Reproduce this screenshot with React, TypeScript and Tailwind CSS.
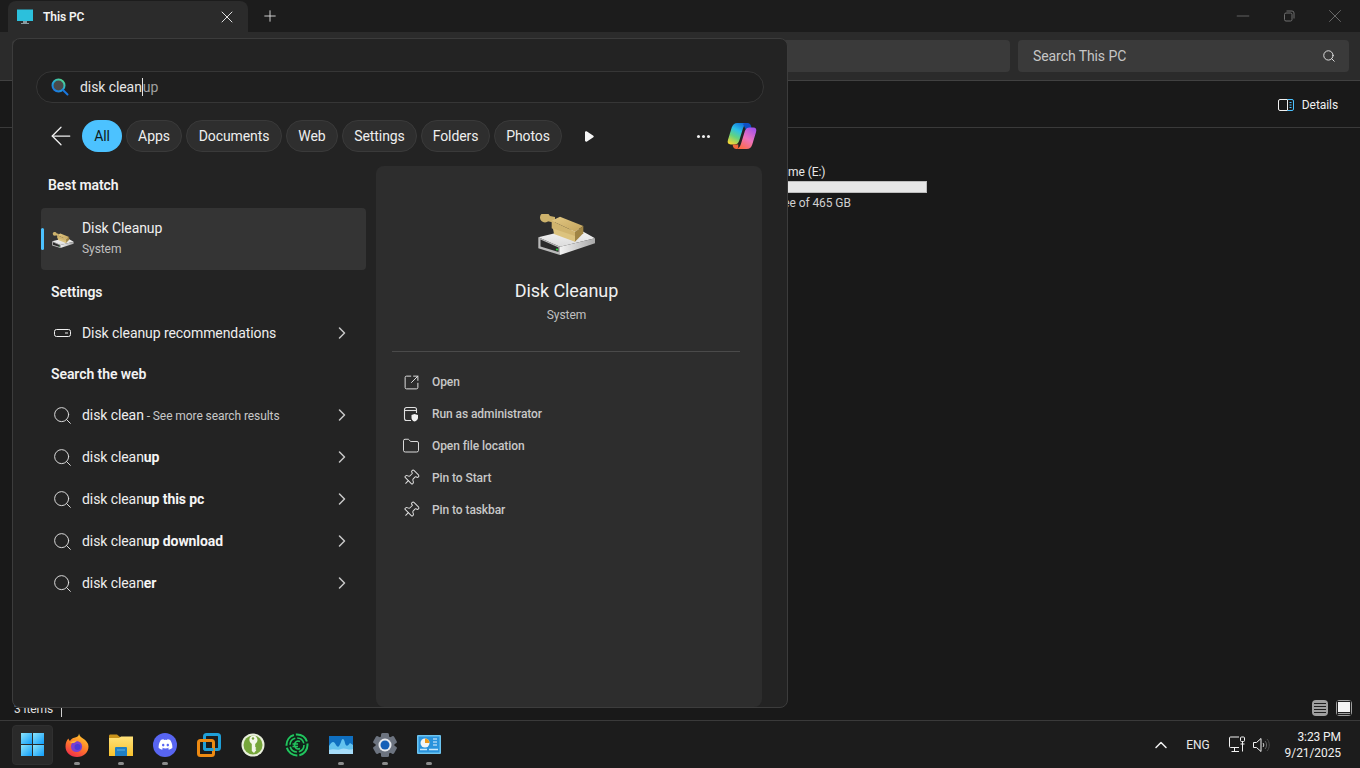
import { ArrowLeft, ChevronRight, ChevronUp, Folder, Minus, Pin, Plus, Search, SquareArrowOutUpRight, X } from 'lucide-react';
import { FaDiscord } from 'react-icons/fa';

function DiskIcon({ className }: { className?: string }) {
  return (
    <svg viewBox="0 0 58 42" className={className}>
      <defs>
        <linearGradient id="dk-top" x1="0" y1="0" x2="0" y2="1">
          <stop offset="0" stopColor="#f6f6f6" />
          <stop offset="1" stopColor="#dcdcdc" />
        </linearGradient>
        <linearGradient id="dk-side" x1="0" y1="0" x2="1" y2="0">
          <stop offset="0" stopColor="#f2f2f2" />
          <stop offset="1" stopColor="#a8a8a8" />
        </linearGradient>
        <linearGradient id="dk-wood" x1="0" y1="0" x2="1" y2="1">
          <stop offset="0" stopColor="#e2c884" />
          <stop offset="1" stopColor="#c4a45c" />
        </linearGradient>
      </defs>
      <path d="M0.3 23.3 L38.7 14 L57 24.3 L22 32.7 Z" fill="url(#dk-top)" />
      <path d="M22 32.7 L57 24.3 L57 29.3 L22 41 Z" fill="url(#dk-side)" />
      <path d="M0.3 23.3 L22 32.7 L22 41 L0.3 34.3 Z" fill="#b9b9b9" />
      <path d="M2.5 25.5 L20.5 33.5 L20.5 38 L2.5 32.5 Z" fill="#2a2a2a" />
      <circle cx="19" cy="35.5" r="1.1" fill="#25d83c" />
      <circle cx="7" cy="3.5" r="5" fill="#cdb26c" />
      <path d="M7 1 L17 3 L17 9 L7 6.5 Z" fill="#cdb26c" />
      <path d="M13.7 6.7 L22 2.7 L45.3 12 L37 17.7 Z" fill="url(#dk-wood)" />
      <path d="M13.7 6.7 L37 17.7 L37 27.7 L13.7 14.3 Z" fill="#d0b46e" />
      <path d="M37 17.7 L45.3 12 L45.3 19.3 L37 27.7 Z" fill="#a08545" />
      <path d="M15 14.5 L37 22 L37 27.7 L16 20 Z" fill="#dcc37e" />
    </svg>
  );
}

function CopilotIcon() {
  return (
    <svg viewBox="0 0 32 30" className="w-[30px] h-[28px]">
      <defs>
        <linearGradient id="cp-a" x1="0.7" y1="0" x2="0.2" y2="1">
          <stop offset="0" stopColor="#1272dc" />
          <stop offset="0.35" stopColor="#2bc0e8" />
          <stop offset="0.65" stopColor="#63d37e" />
          <stop offset="1" stopColor="#f6d635" />
        </linearGradient>
        <linearGradient id="cp-b" x1="0.8" y1="0" x2="0.2" y2="1">
          <stop offset="0" stopColor="#a552ea" />
          <stop offset="0.5" stopColor="#ee73bc" />
          <stop offset="1" stopColor="#ff6a3c" />
        </linearGradient>
      </defs>
      <path d="M11 1 L22 1 C19 2 18 4 17 7 L13 20 C12 23 10 24 8 24 L4 24 C1 24 0 22 1 19 L5 6 C6 3 8 1 11 1 Z" fill="url(#cp-a)" />
      <path d="M17 2 C18 1 20 1 22 1 C24 1 26 3 26 6 L26 8 L20 8 Z" fill="#0f4fc4" />
      <path d="M21 29 L10 29 C13 28 14 26 15 23 L19 10 C20 7 22 6 24 6 L28 6 C31 6 32 8 31 11 L27 24 C26 27 24 29 21 29 Z" fill="url(#cp-b)" />
      <path d="M6 24 L12 24 L12 27 C12 28 11 29 10 29 C8 29 6 27 6 24 Z" fill="#f2663a" />
    </svg>
  );
}

function LensIcon() {
  return (
    <svg viewBox="0 0 18 18" className="w-[18px] h-[18px]">
      <defs>
        <linearGradient id="lens" x1="0.8" y1="0" x2="0.1" y2="1">
          <stop offset="0" stopColor="#52d48c" />
          <stop offset="0.5" stopColor="#22a8d8" />
          <stop offset="1" stopColor="#1a6fe0" />
        </linearGradient>
      </defs>
      <circle cx="7.5" cy="7.5" r="6" fill="#4a4a4a" stroke="url(#lens)" strokeWidth="2" />
      <path d="M12 12 L16.5 16.5" stroke="#1a78e0" strokeWidth="2" strokeLinecap="round" />
    </svg>
  );
}

function AdminIcon() {
  return (
    <svg viewBox="0 0 16 16" className="w-4 h-4" fill="none" stroke="#e0e0e0" strokeWidth="1.1">
      <path d="M8 14.5 H3.5 A2 2 0 0 1 1.5 12.5 V3.5 A2 2 0 0 1 3.5 1.5 H11.5 A2 2 0 0 1 13.5 3.5 V7" />
      <path d="M1.5 4.5 H13.5" />
      <path d="M11.5 8 L15 9 V11.5 C15 13.5 13.5 15 11.5 15.5 C9.5 15 8.5 13.5 8.5 11.5 V9 Z" fill="#f2f2f2" stroke="none" />
    </svg>
  );
}

function WindowsLogo() {
  const cells = ['M0 0h11v11H0z', 'M12 0h11v11H12z', 'M0 12h11v11H0z', 'M12 12h11v11H12z'];
  return (
    <svg viewBox="0 0 23 23" className="w-[23px] h-[23px]">
      <defs>
        <linearGradient id="win" x1="0" y1="0" x2="1" y2="1">
          <stop offset="0" stopColor="#8be4fb" />
          <stop offset="1" stopColor="#0f9dfb" />
        </linearGradient>
      </defs>
      {cells.map((d) => <path key={d} d={d} fill="url(#win)" />)}
    </svg>
  );
}

function FirefoxIcon() {
  return (
    <svg viewBox="0 0 24 24" className="w-6 h-6">
      <defs>
        <linearGradient id="ff" x1="0.7" y1="0" x2="0.2" y2="1">
          <stop offset="0" stopColor="#ffcb2e" />
          <stop offset="0.5" stopColor="#ff7a2a" />
          <stop offset="1" stopColor="#f0264e" />
        </linearGradient>
      </defs>
      <path d="M14 0.5 C14.5 3 16 4 18 5.5 C21 7.5 23.5 10 23.5 13.5 C23.5 19.5 18.5 24 12 24 C5.5 24 0.5 19.5 0.5 13.5 C0.5 10 1.5 7.5 3.5 5.5 C3.8 7 4.5 7.5 5 8 C6.5 5 10 4.5 11.5 4 C13 3.5 14 2 14 0.5 Z" fill="url(#ff)" />
      <circle cx="11.5" cy="13.5" r="5.6" fill="#7b3fd1" />
      <circle cx="12.5" cy="14" r="3" fill="#4b3ad6" />
      <path d="M5 10 C7 8 10 7.5 12 8 L9 10 Z" fill="#ffb23a" />
    </svg>
  );
}

function FolderIcon() {
  return (
    <svg viewBox="0 0 24 24" className="w-6 h-6">
      <defs>
        <linearGradient id="fd" x1="0" y1="0" x2="0" y2="1">
          <stop offset="0" stopColor="#ffe27a" />
          <stop offset="1" stopColor="#f8c22d" />
        </linearGradient>
      </defs>
      <path d="M0 3 C0 2 0.5 1.5 1.5 1.5 H8 L11 4 V6 H0 Z" fill="#c9931a" />
      <path d="M0 5 H10 L12 3.5 H24 V23 H0 Z" fill="url(#fd)" />
      <path d="M6 15 C6 14 7 14 7 14 H17 C18 14 18 15 18 15 V23 H6 Z" fill="#1f7fc4" />
      <path d="M8 17 H16" stroke="#5fb3e6" strokeWidth="1" />
    </svg>
  );
}

function VmIcon() {
  return (
    <svg viewBox="0 0 24 24" className="w-6 h-6" fill="none" strokeWidth="3">
      <rect x="7.5" y="1.5" width="15" height="15" rx="2" stroke="#1f9fd8" />
      <rect x="1.5" y="7.5" width="15" height="15" rx="2" stroke="#ee8a12" />
      <path d="M7.5 12 V15 C7.5 16 8 16.5 9 16.5 H16.5" stroke="#1f9fd8" />
    </svg>
  );
}

function KeyIcon() {
  return (
    <svg viewBox="0 0 24 24" className="w-6 h-6">
      <circle cx="12" cy="12" r="11.5" fill="#e9efdc" />
      <path d="M23.5 12 A11.5 11.5 0 0 1 .5 12 A11.5 11.5 0 0 0 23.5 12 Z" fill="#5f8f2f" />
      <circle cx="12" cy="12" r="9.5" fill="#76a63a" />
      <path d="M12 2.5 a4.5 4.5 0 0 1 2.2 8.4 V14 l1.2 1 -1.2 1 1.2 1 -2.4 3 -2.2 -2 V10.9 A4.5 4.5 0 0 1 12 2.5 Z" fill="#f4f7ea" />
      <circle cx="12" cy="5.5" r="1.2" fill="#76a63a" />
    </svg>
  );
}

function EuroRingIcon() {
  return (
    <svg viewBox="0 0 24 24" className="w-6 h-6" fill="none" stroke="#22c55e">
      <circle cx="12" cy="12" r="12" fill="#11241a" stroke="none" />
      <circle cx="12" cy="12" r="10.5" strokeWidth="2" strokeDasharray="14 2" />
      <circle cx="12" cy="12" r="7" strokeWidth="1.6" strokeDasharray="9 2" />
      <path d="M15 8.5 C12 7 9.5 9 9.5 12 C9.5 15 12 17 15 15.5 M7.5 11 H13 M7.5 13.5 H13" strokeWidth="1.6" />
    </svg>
  );
}

function ChartIcon() {
  return (
    <svg viewBox="0 0 24 18" className="w-6 h-[18px]">
      <rect width="24" height="18" fill="#0f6fc0" />
      <path d="M0 10 C3 5 5 5 7 9 C9 12 10 11 12 6 C13 2 15 2 16 7 C17 11 19 10 21 7 L24 9 V18 H0 Z" fill="#63c2ee" />
      <path d="M0 14 C5 12 9 15 12 13 C16 11 20 15 24 13 V18 H0 Z" fill="#a6dcf8" />
    </svg>
  );
}

function GearIcon() {
  const teeth = [0, 60, 120, 180, 240, 300];
  return (
    <svg viewBox="0 0 24 24" className="w-6 h-6">
      <circle cx="12" cy="12" r="9.5" fill="#6d7480" />
      {teeth.map((deg) => (
        <rect key={deg} x="8" y="0" width="8" height="6" rx="1.5" fill="#6d7480" transform={`rotate(${deg} 12 12)`} />
      ))}
      <circle cx="12" cy="12" r="6.5" fill="#e6e9ee" />
      <circle cx="12" cy="12" r="4.5" fill="#1560b8" />
    </svg>
  );
}

function PanelIcon() {
  return (
    <svg viewBox="0 0 24 19" className="w-6 h-[19px]">
      <rect width="24" height="19" rx="1" fill="#6cc4f0" />
      <rect x="1.5" y="1.5" width="21" height="16" fill="#2a93dc" />
      <circle cx="8" cy="8" r="4.5" fill="#f4f4f4" />
      <path d="M8 8 V3.5 A4.5 4.5 0 0 1 12.5 8 Z" fill="#f09a1a" />
      <path d="M3 14.5 H10 M12 14.5 H21" stroke="#cdeafb" strokeWidth="1.5" />
      <path d="M16 4 H20 M16 7 H20 M16 10 H20" stroke="#e6f4fd" strokeWidth="1.2" />
    </svg>
  );
}

function NetworkIcon() {
  return (
    <svg viewBox="0 0 17 18" className="w-[17px] h-[18px]" fill="none" stroke="#f2f2f2" strokeWidth="1">
      <path d="M10 11.5 H1.5 A1 1 0 0 1 .5 10.5 V2 A1 1 0 0 1 1.5 1 H10" />
      <path d="M5.5 11.5 V15 M2.5 15.5 H10" />
      <rect x="11.5" y="1" width="4" height="4.5" rx="1" />
      <path d="M13.5 5.5 V15.5 M11.5 8 H15.5" />
    </svg>
  );
}

function VolumeIcon() {
  return (
    <svg viewBox="0 0 17 16" className="w-[17px] h-4" fill="none" strokeWidth="1">
      <path d="M.5 5.5 H3.5 L8 1.5 V14.5 L3.5 10.5 H.5 Z" stroke="#f2f2f2" />
      <path d="M10 6 C11 7 11 9 10 10" stroke="#d0d0d0" />
      <path d="M12 4 C14 6 14 10 12 12" stroke="#6a6a6a" />
      <path d="M14 2 C17 5 17 11 14 14" stroke="#4c4c4c" />
    </svg>
  );
}

const filters = [
  { label: 'Apps', w: 'w-[56px]' },
  { label: 'Documents', w: 'w-[96px]' },
  { label: 'Web', w: 'w-[52px]' },
  { label: 'Settings', w: 'w-[75px]' },
  { label: 'Folders', w: 'w-[69px]' },
  { label: 'Photos', w: 'w-[68px]' },
];

const webResults = [
  { plain: 'disk clean', bold: '', extra: ' - See more search results' },
  { plain: 'disk clean', bold: 'up', extra: '' },
  { plain: 'disk clean', bold: 'up this pc', extra: '' },
  { plain: 'disk clean', bold: 'up download', extra: '' },
  { plain: 'disk clean', bold: 'er', extra: '' },
];

const actions = [
  { label: 'Open', icon: <SquareArrowOutUpRight className="w-[17px] h-[17px]" strokeWidth={1.4} /> },
  { label: 'Run as administrator', icon: <AdminIcon /> },
  { label: 'Open file location', icon: <Folder className="w-[18px] h-[18px]" strokeWidth={1.3} /> },
  { label: 'Pin to Start', icon: <Pin className="w-[18px] h-[18px] rotate-45" strokeWidth={1.3} /> },
  { label: 'Pin to taskbar', icon: <Pin className="w-[18px] h-[18px] rotate-45" strokeWidth={1.3} /> },
];

const taskbarApps = [
  { icon: <FirefoxIcon />, open: true },
  { icon: <FolderIcon />, open: true },
  { icon: <div className="w-6 h-6 rounded-full bg-[#5865f2] flex items-center justify-center text-white"><FaDiscord className="w-[15px] h-[15px]" /></div>, open: true },
  { icon: <VmIcon />, open: false },
  { icon: <KeyIcon />, open: false },
  { icon: <EuroRingIcon />, open: false },
  { icon: <ChartIcon />, open: true },
  { icon: <GearIcon />, open: true },
  { icon: <PanelIcon />, open: true },
];

function Explorer() {
  return (
    <div className="flex-1 flex flex-col min-h-0">
      <div className="h-[32px] bg-[#1c1c1c] flex items-end pl-2">
        <div className="w-[240px] h-[31px] bg-[#2b2b2b] rounded-t-lg flex items-center pl-[9px] pr-[11px]">
          <svg viewBox="0 0 16 16" className="w-4 h-4 shrink-0">
            <rect y="0.5" width="16" height="11.5" fill="#2cc0dc" />
            <path d="M6 12 H10 V14 H12 V15 H4 V14 H6 Z" fill="#8a9aa0" />
          </svg>
          <span className="ml-[10px] text-[12px] font-semibold text-[#f2f2f2]">This PC</span>
          <X className="ml-auto w-5 h-5 text-[#e0e0e0]" strokeWidth={1.2} />
        </div>
        <Plus className="ml-[13px] mb-[7px] w-[18px] h-[18px] text-[#e0e0e0]" strokeWidth={1.2} />
        <div className="ml-auto flex items-center text-[#6f6f6f] h-full">
          <Minus className="w-5 h-5" strokeWidth={1} />
          <svg viewBox="0 0 12 12" className="ml-[30px] w-3 h-3" fill="none" stroke="#6f6f6f">
            <rect x="1.5" y="3" width="7.5" height="8" rx="1.5" />
            <path d="M3.5 1 H9 A2 2 0 0 1 11 3 V8.5" />
          </svg>
          <X className="ml-[29px] mr-[14px] w-[22px] h-[22px]" strokeWidth={1} />
        </div>
      </div>
      <div className="h-[49px] bg-[#2b2b2b] border-b border-[#414141] flex items-center justify-end pr-[11px]">
        <div className="flex-1 h-[32px] ml-[12px] bg-[#3a3a3a] rounded" />
        <div className="ml-2 w-[331px] h-[32px] bg-[#3a3a3a] rounded flex items-center justify-between pl-[15px] pr-[13px]">
          <span className="text-[14px] text-[#c6c6c6]">Search This PC</span>
          <Search className="w-[14px] h-[14px] text-[#e6e6e6]" strokeWidth={1.6} />
        </div>
      </div>
      <div className="h-[47px] bg-[#191919] border-b border-[#3a3a3a] flex items-center justify-end pr-[22px] pt-[2px]">
        <svg viewBox="0 0 16 12" className="w-4 h-3" fill="none" strokeWidth="1">
          <path d="M9.5 .5 H2 A1.5 1.5 0 0 0 .5 2 V10 A1.5 1.5 0 0 0 2 11.5 H9.5 Z" stroke="#f0f0f0" />
          <path d="M9.5 .5 H14 A1.5 1.5 0 0 1 15.5 2 V10 A1.5 1.5 0 0 1 14 11.5 H9.5" stroke="#4cc2ff" />
          <path d="M11.5 3.5 H13.5 M11.5 6 H13.5 M11.5 8.5 H13.5" stroke="#4cc2ff" />
        </svg>
        <span className="ml-2 text-[12px] text-[#f0f0f0]">Details</span>
      </div>
      <div className="flex-1 bg-[#191919] pl-[740px] pt-[36px]">
        <div className="w-[187px] text-[12px] leading-4 text-[#e8e8e8]">
          <div className="-ml-[2px]">New Volume (E:)</div>
          <div className="mt-px h-[12px] bg-[#e6e6e6] border border-[#bcbcbc]" />
          <div className="mt-[2px] -ml-[6px] text-[#d0d0d0]">120 GB free of 465 GB</div>
        </div>
      </div>
      <div className="h-[24px] bg-[#191919] flex items-center pl-[14px] pr-2 text-[12px] text-[#e0e0e0]">
        <span className="mt-[2px]">3 items</span>
        <span className="ml-[8px] w-px h-[10px] bg-[#d0d0d0] mt-[8px]" />
        <div className="ml-auto flex gap-2">
          <div className="w-4 h-4 rounded-sm bg-[#a0a0a0] flex flex-col justify-center gap-[2px] px-[2px]">
            <span className="h-px bg-[#202020]" />
            <span className="h-px bg-[#202020]" />
            <span className="h-px bg-[#202020]" />
            <span className="h-px bg-[#202020]" />
          </div>
          <div className="w-4 h-4 rounded-sm bg-[#a0a0a0] p-px">
            <div className="h-full bg-[#202020] p-px flex flex-col gap-px">
              <span className="flex-1 bg-[#f5f5f5]" />
              <span className="h-px bg-[#a0a0a0]" />
            </div>
          </div>
        </div>
      </div>
    </div>
  );
}

function Taskbar() {
  return (
    <div className="h-[48px] bg-[#1c1c1c] border-t border-[#3a3a3a] flex items-center pl-[12px] pr-[19px] text-white">
      <div className="w-[41px] h-[40px] rounded bg-[#2a2a2a] border border-[#303030] flex items-center justify-center">
        <WindowsLogo />
      </div>
      <div className="ml-[2px] flex">
        {taskbarApps.map((app, i) => (
          <div key={i} className="relative w-[44px] h-[47px] flex items-center justify-center">
            {app.icon}
            {app.open && <span className="absolute bottom-[3px] left-[19px] w-[6px] h-[3px] rounded-full bg-[#8c8c8c]" />}
          </div>
        ))}
      </div>
      <div className="ml-auto flex items-center">
        <ChevronUp className="w-5 h-5 text-[#f0f0f0]" strokeWidth={1.8} />
        <span className="ml-[15px] text-[12px] text-[#e8e8e8]">ENG</span>
        <div className="ml-[19px] flex items-center gap-[7px]">
          <NetworkIcon />
          <VolumeIcon />
        </div>
        <div className="ml-[15px] text-[12px] leading-[16px] text-right text-[#f0f0f0]">
          <div>3:23 PM</div>
          <div>9/21/2025</div>
        </div>
      </div>
    </div>
  );
}

function SearchFlyout() {
  return (
    <div className="absolute left-[12px] top-[38px] w-[776px] h-[670px] bg-[#232323] border border-[#3c3c3c] rounded-lg overflow-hidden flex flex-col">
      <div className="mt-[32px] mx-[23px] h-[32px] rounded-full bg-[#1f1f1f] border border-[#363636] flex items-center pl-[14px] shrink-0">
        <LensIcon />
        <span className="ml-[11px] text-[14px] text-[#e6e6e6]">disk clean</span>
        <span className="w-px h-[18px] bg-[#e6e6e6]" />
        <span className="text-[14px] text-[#a0a0a0]">up</span>
      </div>
      <div className="mt-[17px] h-[32px] flex items-center pl-[33px] shrink-0">
        <ArrowLeft className="w-[30px] h-[30px] text-[#f0f0f0]" strokeWidth={1} />
        <div className="ml-[6px] w-[40px] h-[32px] rounded-full bg-[#4cc2ff] text-[#0f1a20] text-[14px] flex items-center justify-center">All</div>
        <div className="ml-1 flex gap-1">
          {filters.map((f) => (
            <div key={f.label} className={`${f.w} h-[32px] rounded-full bg-[#2e2e2e] border border-[#3a3a3a] text-[14px] text-[#eeeeee] flex items-center justify-center`}>
              {f.label}
            </div>
          ))}
        </div>
        <svg viewBox="0 0 10 11" className="ml-[22px] w-[10px] h-[11px]">
          <path d="M1 1.5 C1 .5 2 0 3 .5 L9 4.5 C10 5 10 6 9 6.5 L3 10.5 C2 11 1 10.5 1 9.5 Z" fill="#f5f5f5" />
        </svg>
        <div className="ml-[103px] flex gap-[2px]">
          <span className="w-[3px] h-[3px] rounded-full bg-[#f0f0f0]" />
          <span className="w-[3px] h-[3px] rounded-full bg-[#f0f0f0]" />
          <span className="w-[3px] h-[3px] rounded-full bg-[#f0f0f0]" />
        </div>
        <div className="ml-[17px]"><CopilotIcon /></div>
      </div>
      <div className="mt-[14px] flex-1 flex pl-[28px] pr-[25px] min-h-0">
        <div className="w-[325px] shrink-0">
          <div className="h-[42px] flex items-center pl-[7px] pb-[4px] text-[14px] font-semibold text-[#f2f2f2]">Best match</div>
          <div className="relative h-[62px] rounded bg-[#343434] flex items-center pl-[11px]">
            <span className="absolute left-0 top-[20px] w-[3px] h-[22px] rounded-full bg-[#4cc2ff]" />
            <DiskIcon className="w-[22px] h-[17px] mt-[2px]" />
            <div className="ml-2 pb-[3px]">
              <div className="text-[14px] leading-[20px] text-[#f0f0f0]">Disk Cleanup</div>
              <div className="mt-[3px] text-[12px] leading-4 text-[#c0c0c0]">System</div>
            </div>
          </div>
          <div className="h-[42px] flex items-center pl-[10px] pt-[2px] text-[14px] font-semibold text-[#f2f2f2]">Settings</div>
          <div className="h-[42px] flex items-center pl-[13px] pr-[14px]">
            <svg viewBox="0 0 17 8" className="w-[17px] h-2 shrink-0" fill="none" stroke="#f0f0f0">
              <rect x=".5" y=".5" width="16" height="7" rx="2" />
              <path d="M11 4 H14" />
            </svg>
            <span className="ml-[11px] text-[14px] text-[#eeeeee]">Disk cleanup recommendations</span>
            <ChevronRight className="ml-auto w-5 h-5 text-[#c8c8c8]" strokeWidth={1.8} />
          </div>
          <div className="h-[40px] flex items-center pl-[10px] text-[14px] font-semibold text-[#f2f2f2]">Search the web</div>
          {webResults.map((r) => (
            <div key={r.plain + r.bold + r.extra} className="h-[42px] flex items-center pl-[11px] pr-[14px]">
              <Search className="w-[21px] h-[21px] shrink-0 text-[#e0e0e0]" strokeWidth={1.1} />
              <span className="ml-[9px] text-[14px] text-[#eeeeee]">
                {r.plain}
                {r.bold && <span className="font-bold text-[#f5f5f5]">{r.bold}</span>}
                {r.extra && <span className="text-[12px] text-[#c8c8c8]">{r.extra}</span>}
              </span>
              <ChevronRight className="ml-auto w-5 h-5 text-[#c8c8c8]" strokeWidth={1.8} />
            </div>
          ))}
        </div>
        <div className="ml-[10px] flex-1 bg-[#2d2d2d] rounded-lg pl-4 pr-[22px] pt-[48px]">
          <div className="flex flex-col items-center pl-px">
            <DiskIcon className="w-[58px] h-[42px]" />
            <div className="mt-[23px] text-[18px] leading-[24px] text-[#f0f0f0]">Disk Cleanup</div>
            <div className="mt-[4px] text-[12px] leading-4 text-[#c0c0c0]">System</div>
          </div>
          <div className="mt-[28px] h-px bg-[#4a4a4a]" />
          <div className="mt-[14px]">
            {actions.map((a) => (
              <div key={a.label} className="h-[32px] flex items-center pl-[10px] text-[#e0e0e0]">
                <span className="w-[18px] flex justify-center">{a.icon}</span>
                <span className="ml-[12px] text-[12px] font-medium text-[#c8c8c8]">{a.label}</span>
              </div>
            ))}
          </div>
        </div>
      </div>
    </div>
  );
}

export default function App() {
  return (
    <div className="relative w-[1360px] h-[768px] overflow-hidden bg-[#191919] flex flex-col tracking-[-0.08px] font-['Roboto',sans-serif]">
      <Explorer />
      <Taskbar />
      <SearchFlyout />
    </div>
  );
}
